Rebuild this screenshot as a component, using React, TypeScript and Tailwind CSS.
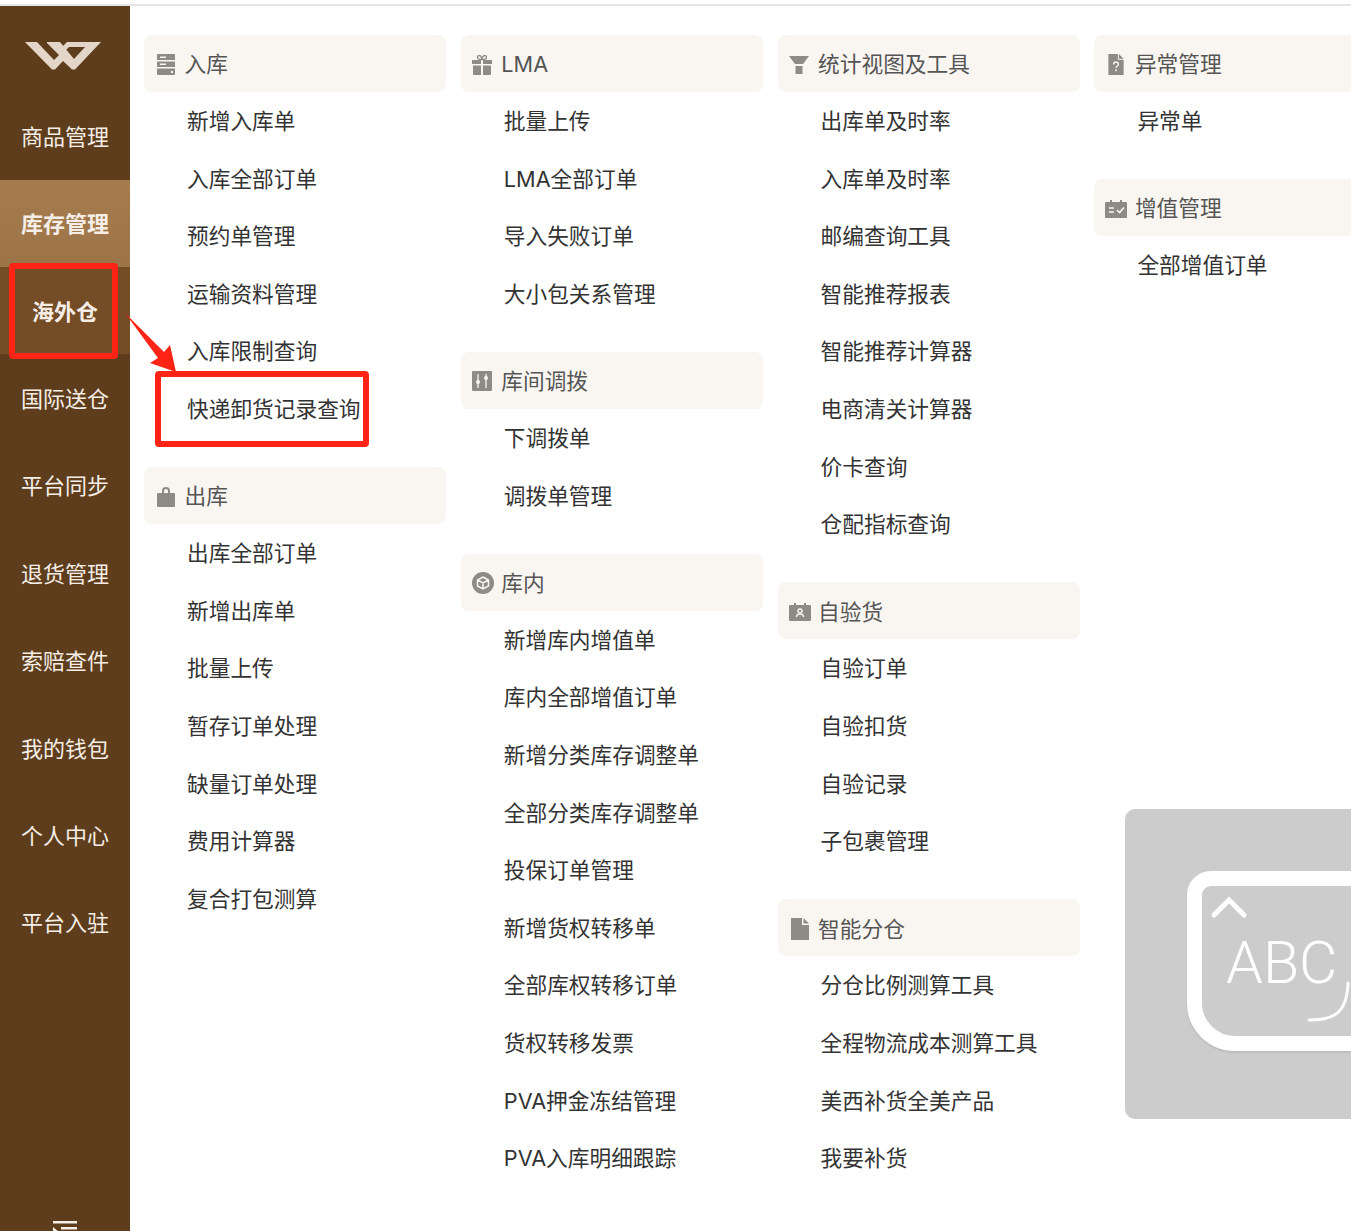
const FONT = 'font-["Inter","Noto_Sans_CJK_SC",sans-serif]';

const navItems = ["库存管理", "海外仓", "国际送仓", "平台同步", "退货管理", "索赔查件", "我的钱包", "个人中心", "平台入驻"];

const IconServer = () => (
  <svg viewBox="0 0 18 22" className="w-[18px] h-[22px] fill-[#8d8b86]">
    <path d="M1 0h16a1 1 0 0 1 1 1v5H0V1a1 1 0 0 1 1-1zm2 2.500v1.500h6V2.500zM0 7.500h18V13H0zm3 2v1.500h6V9.500zM0 14.500h18V20a1 1 0 0 1-1 1H1a1 1 0 0 1-1-1zm14 2.500v2h2v-2z" fillRule="evenodd" />
  </svg>
);
const IconBag = () => (
  <svg viewBox="0 0 18 20" className="w-[18px] h-[20px] fill-[#8d8b86]">
    <path d="M5 6V4a4 4 0 0 1 8 0v2h4a1 1 0 0 1 1 1v12a1 1 0 0 1-1 1H1a1 1 0 0 1-1-1V7a1 1 0 0 1 1-1zm2 0h4V4a2 2 0 0 0-4 0z" fillRule="evenodd" />
  </svg>
);
const IconGift = () => (
  <svg viewBox="0 0 20 20" className="w-[20px] h-[20px] -ml-[2px] fill-[#8d8b86]">
    <path d="M0 5h9v4H0zM11 5h9v4h-9zM1 10.500h8V20H2a1 1 0 0 1-1-1zM11 10.500h8V19a1 1 0 0 1-1 1h-7z" />
    <path d="M10 4.500C8 4.500 5.500 4 5.500 2.300 5.500.8 7.500 0 8.500 1 9.300 1.800 10 3 10 4.500c0-1.500.7-2.700 1.500-3.500 1-1 3-.2 3 1.300C14.500 4 12 4.500 10 4.500z" fill="none" stroke="#8d8b86" strokeWidth="1.300" />
  </svg>
);
const IconSliders = () => (
  <svg viewBox="0 0 20 20" className="w-[20px] h-[20px] -ml-[2px]">
    <rect width="20" height="20" rx="1" fill="#8d8b86" />
    <path d="M6 3v14M14 3v14" stroke="#f9f5f1" strokeWidth="1.300" />
    <circle cx="6" cy="11" r="2" fill="#f9f5f1" />
    <circle cx="14" cy="7" r="2" fill="#f9f5f1" />
  </svg>
);
const IconBox = () => (
  <svg viewBox="0 0 22 22" className="w-[22px] h-[22px] -ml-[2px]">
    <circle cx="11" cy="11" r="11" fill="#8d8b86" />
    <path d="M11 5l5.500 3v6L11 17l-5.500-3V8zM5.500 8L11 11l5.500-3M11 11v6" fill="none" stroke="#f9f5f1" strokeWidth="1.500" />
  </svg>
);
const IconFunnel = () => (
  <svg viewBox="0 0 20 18" className="w-[20px] h-[18px] -ml-[2px] fill-[#8d8b86]">
    <path d="M0 0h20l-6 8H6zM6.500 10h7v8h-7z" />
  </svg>
);
const IconBadge = () => (
  <svg viewBox="0 0 22 18" className="w-[22px] h-[18px] -ml-[2px]">
    <path d="M5 0h2v2h8V0h2v2h4a1 1 0 0 1 1 1v14a1 1 0 0 1-1 1H1a1 1 0 0 1-1-1V3a1 1 0 0 1 1-1h4z" fill="#8d8b86" />
    <circle cx="11" cy="8" r="2" fill="none" stroke="#f9f5f1" strokeWidth="1.400" />
    <path d="M7.500 14c0-4 7-4 7 0" fill="none" stroke="#f9f5f1" strokeWidth="1.400" />
  </svg>
);
const IconFile = () => (
  <svg viewBox="0 0 18 22" className="w-[18px] h-[22px] fill-[#8d8b86]">
    <path d="M0 0h11v7h7v15H0zM12.500 0L18 5.500h-5.500z" />
  </svg>
);
const IconFileQ = () => (
  <svg viewBox="0 0 16 22" className="w-[16px] h-[21px] ml-[1px]">
    <path d="M0 0h10v6h6v16H0zM11 0l5 5h-5z" fill="#8d8b86" />
    <path d="M5.500 11c0-3.500 5-3.500 5 0 0 1.800-2.500 1.800-2.500 3.500M8 16v2" fill="none" stroke="#f9f5f1" strokeWidth="1.500" />
  </svg>
);
const IconCalCheck = () => (
  <svg viewBox="0 0 22 18" className="w-[22px] h-[18px] -ml-[2px]">
    <path d="M5 0h2v2h8V0h2v2h4a1 1 0 0 1 1 1v14a1 1 0 0 1-1 1H1a1 1 0 0 1-1-1V3a1 1 0 0 1 1-1h4z" fill="#8d8b86" />
    <path d="M4 8h5M4 12h5M12 10l2.500 2.500L19 7.500" fill="none" stroke="#f9f5f1" strokeWidth="1.600" />
  </svg>
);

type Section = { title: string; icon: React.ReactNode; items: string[] };

const columns: Section[][] = [
  [
    { title: "入库", icon: <IconServer />, items: ["新增入库单", "入库全部订单", "预约单管理", "运输资料管理", "入库限制查询", "快递卸货记录查询"] },
    { title: "出库", icon: <IconBag />, items: ["出库全部订单", "新增出库单", "批量上传", "暂存订单处理", "缺量订单处理", "费用计算器", "复合打包测算"] },
  ],
  [
    { title: "LMA", icon: <IconGift />, items: ["批量上传", "LMA全部订单", "导入失败订单", "大小包关系管理"] },
    { title: "库间调拨", icon: <IconSliders />, items: ["下调拨单", "调拨单管理"] },
    { title: "库内", icon: <IconBox />, items: ["新增库内增值单", "库内全部增值订单", "新增分类库存调整单", "全部分类库存调整单", "投保订单管理", "新增货权转移单", "全部库权转移订单", "货权转移发票", "PVA押金冻结管理", "PVA入库明细跟踪"] },
  ],
  [
    { title: "统计视图及工具", icon: <IconFunnel />, items: ["出库单及时率", "入库单及时率", "邮编查询工具", "智能推荐报表", "智能推荐计算器", "电商清关计算器", "价卡查询", "仓配指标查询"] },
    { title: "自验货", icon: <IconBadge />, items: ["自验订单", "自验扣货", "自验记录", "子包裹管理"] },
    { title: "智能分仓", icon: <IconFile />, items: ["分仓比例测算工具", "全程物流成本测算工具", "美西补货全美产品", "我要补货"] },
  ],
  [
    { title: "异常管理", icon: <IconFileQ />, items: ["异常单"] },
    { title: "增值管理", icon: <IconCalCheck />, items: ["全部增值订单"] },
  ],
];

function Sidebar() {
  return (
    <aside className="relative w-[130px] shrink-0 h-full bg-[#5d3d1c] text-[22px] text-[#f6eee6] overflow-hidden">
      <div className="h-[88px] flex justify-center pt-[36px] pr-[5px]">
        <svg viewBox="0 0 76 28" className="w-[76px] h-[28px] fill-[#e3d6c8]">
          <path d="M0 0h12l17 18 5-5L22 1V0h13l14 17L60 5H44l-4 4-3-4 5-5h34L50 27.500h-3L38 19l-8 8.500h-3z" />
        </svg>
      </div>
      <div className="h-[86px] flex items-center justify-center">商品管理</div>
      {navItems.map((name, i) => (
        <div
          key={name}
          className={
            i === 0
              ? "h-[87px] pt-[2px] flex items-center justify-center font-bold bg-gradient-to-b from-[#a67c4d] to-[#9b7448]"
              : i === 1
                ? "h-[87.400px] pt-[3px] flex items-center justify-center font-bold bg-[#744d26]"
                : "h-[87.400px] pt-[3px] flex items-center justify-center"
          }
        >
          {name}
        </div>
      ))}
      <svg viewBox="0 0 24 10" className="absolute left-[53px] top-[1215px] w-[24px] h-[10px] fill-[#f6eee6]">
        <path d="M0 0h24v2.500H0zM8 6h16v2.500H8zM0 6l6 5H0z" />
      </svg>
    </aside>
  );
}

function MenuSection({ section }: { section: Section }) {
  return (
    <section>
      <div className="h-[57px] mb-[0.600px] pt-[2px] flex items-center pl-[13px] rounded-lg bg-[#f9f5f1] text-[#555]">
        <span className="w-[27.500px] flex items-center shrink-0">{section.icon}</span>
        <span>{section.title}</span>
      </div>
      <ul>
        {section.items.map((item) => (
          <li key={item} className="h-[57.600px] flex items-center pl-[43px] text-[#333] whitespace-nowrap">
            {item}
          </li>
        ))}
      </ul>
    </section>
  );
}

function KeyboardCard() {
  return (
    <div className="absolute left-[1125px] top-[809px] w-[300px] h-[310px] rounded-[10px] bg-[#cccccc]">
      <div className="absolute left-[62px] top-[62px] w-[230px] h-[180px] border-[15px] border-white rounded-tl-[24px] rounded-bl-[48px] rounded-r-[40px] shadow-[0_2px_2px_rgba(0,0,0,0.08)]" />
      <span className="absolute left-[101px] top-[124px] font-['Roboto'] font-light text-[59px] leading-none text-white whitespace-nowrap">ABC</span>
      <svg viewBox="0 0 240 200" className="absolute left-[62px] top-[62px] w-[240px] h-[200px] fill-none stroke-white">
        <path d="M27 44l15-15 15 15" strokeWidth="5" strokeLinecap="round" />
        <path d="M122 149c24 0 38-6 39-37" strokeWidth="3" strokeLinecap="round" />
      </svg>
    </div>
  );
}

function Annotations() {
  return (
    <>
      <div className="absolute left-[9px] top-[263px] w-[109px] h-[96px] border-[6px] border-[#ff2415] rounded-[4px]" />
      <div className="absolute left-[155px] top-[371px] w-[214px] h-[76px] border-[6px] border-[#ff2415] rounded-[4px]" />
      <svg viewBox="0 0 60 70" className="absolute left-[120px] top-[308px] w-[60px] h-[70px] fill-[#ff2415]">
        <polygon points="5,5 44,44 50,37 56,64 30,55 38,50" />
      </svg>
    </>
  );
}

export default function App() {
  return (
    <div className={`relative h-[1231px] overflow-hidden bg-white text-[21.7px] ${FONT}`}>
      <div className="h-[6px] border-b-2 border-[#e5e5e5]" />
      <div className="flex h-[1225px]">
        <Sidebar />
        <main className="flex gap-[14.800px] pl-[14px] pt-[29px]">
          {columns.map((sections, i) => (
            <div key={i} className="w-[302px] shrink-0 flex flex-col gap-[29px]">
              {sections.map((section) => (
                <MenuSection key={section.title} section={section} />
              ))}
            </div>
          ))}
        </main>
      </div>
      <KeyboardCard />
      <Annotations />
    </div>
  );
}
